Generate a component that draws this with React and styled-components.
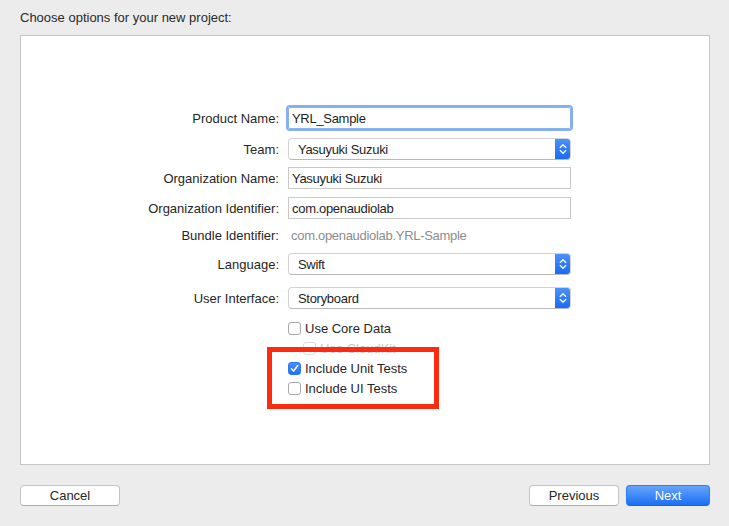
import React from 'react';
import styled, { createGlobalStyle } from 'styled-components';

const GlobalStyle = createGlobalStyle`
    body {
        margin: 0;
        background: #ececec;
        font-family: "Liberation Sans", Arial, sans-serif;
        font-size: 13px;
        color: #262626;
    }
`;

const Page = styled.div`
    width: 729px;
    height: 526px;
    box-sizing: border-box;
    padding: 0 19px 0 20px;
    display: flex;
    flex-direction: column;
`;

const Header = styled.div`
    height: 35px;
    display: flex;
    align-items: center;
    padding-bottom: 1px;
    box-sizing: border-box;
    font-size: 13px;
    color: #2a2a2a;
`;

const Panel = styled.div`
    position: relative;
    height: 430px;
    box-sizing: border-box;
    background: #fff;
    border: 1px solid #c6c6c6;
    padding-top: 71px;
`;

const Row = styled.div`
    display: flex;
    align-items: center;
    height: ${p => p.h || 22}px;
    margin-top: ${p => p.mt || 0}px;
`;

const Label = styled.div`
    width: 258px;
    margin-right: 9px;
    text-align: right;
    color: #262626;
    white-space: nowrap;
`;

const TextInput = styled.div`
    width: 283px;
    height: 22px;
    box-sizing: border-box;
    border: 1px solid #c9c9c9;
    padding-left: 3px;
    display: flex;
    align-items: center;
    color: #1e1e1e;
    letter-spacing: -0.3px;
    ${p => p.focused && `
        border-color: #8ab2f2;
        box-shadow: 0 0 0 2px #84aff4;
        border-radius: 2px;
    `}
`;

const Popup = styled.div`
    width: 283px;
    height: 22px;
    box-sizing: border-box;
    border: 1px solid #d2d2d2;
    border-bottom-color: #b8b8b8;
    border-radius: 4px;
    display: flex;
    align-items: center;
    justify-content: space-between;
    padding-left: 9px;
    overflow: hidden;
    color: #1e1e1e;
    letter-spacing: -0.3px;
`;

const Stepper = styled.div`
    width: 16px;
    height: 22px;
    margin-right: -1px;
    background: linear-gradient(#4f93f8, #1769f4);
    display: flex;
    align-items: center;
    justify-content: center;
`;

const Plain = styled.div`
    padding-left: 3px;
    color: #8c8c8c;
    letter-spacing: -0.3px;
`;

const CheckRow = styled.div`
    display: flex;
    align-items: center;
    height: 20px;
    margin-top: ${p => p.mt || 0}px;
    padding-left: ${p => 267 + (p.indent || 0)}px;
    color: ${p => (p.disabled ? '#c8c8c8' : '#262626')};
`;

const Box = styled.span`
    width: 13px;
    height: 13px;
    box-sizing: border-box;
    border-radius: 3px;
    margin-right: 4px;
    display: flex;
    align-items: center;
    justify-content: center;
    border: 1px solid ${p => (p.disabled ? '#dcdcdc' : '#a9a9a9')};
    background: ${p => (p.checked ? 'linear-gradient(#4b91f8, #1f6ff5)' : '#fff')};
    ${p => p.checked && 'border-color: #2f78f2;'}
`;

const Highlight = styled.div`
    position: absolute;
    left: 246px;
    top: 311px;
    width: 172px;
    height: 62px;
    box-sizing: border-box;
    border: 5px solid #fb2b10;
`;

const Footer = styled.div`
    flex: 1;
    display: flex;
    align-items: flex-start;
    padding-top: 20px;
    gap: 7px;
`;

const Spacer = styled.div`
    flex: 1;
`;

const Button = styled.button`
    height: 21px;
    width: ${p => p.w}px;
    box-sizing: border-box;
    border-radius: 4px;
    font-family: "Liberation Sans", Arial, sans-serif;
    font-size: 13px;
    padding: 0;
    border: 1px solid ${p => (p.primary ? '#2f7cf5' : '#c4c4c4')};
    border-bottom-color: ${p => (p.primary ? '#1563ea' : '#acacac')};
    background: ${p => (p.primary ? 'linear-gradient(#66a4f9, #1b6ff6)' : '#fff')};
    color: ${p => (p.primary ? '#fff' : '#262626')};
`;

const Arrows = () => (
    <svg width="8" height="12" viewBox="0 0 8 12">
        <path d="M1.2 4.4 L4 1.8 L6.8 4.4 M1.2 7.6 L4 10.2 L6.8 7.6" fill="none" stroke="#fff" strokeWidth="1.3" strokeLinecap="round" strokeLinejoin="round" />
    </svg>
);

const Check = () => (
    <svg width="9" height="9" viewBox="0 0 9 9">
        <path d="M1.5 4.8 L3.6 7 L7.6 1.8" fill="none" stroke="#fff" strokeWidth="1.5" strokeLinecap="round" strokeLinejoin="round" />
    </svg>
);

const Select = ({ value }) => (
    <Popup>
        <span>{value}</span>
        <Stepper><Arrows /></Stepper>
    </Popup>
);

const Checkbox = ({ label, checked, disabled, indent, mt }) => (
    <CheckRow indent={indent} disabled={disabled} mt={mt}>
        <Box checked={checked} disabled={disabled}>{checked && <Check />}</Box>
        {label}
    </CheckRow>
);

export default function App() {
    return (
        <Page>
            <GlobalStyle />
            <Header>Choose options for your new project:</Header>
            <Panel>
                <Row>
                    <Label>Product Name:</Label>
                    <TextInput focused>YRL_Sample</TextInput>
                </Row>
                <Row mt={9}>
                    <Label>Team:</Label>
                    <Select value="Yasuyuki Suzuki" />
                </Row>
                <Row mt={7}>
                    <Label>Organization Name:</Label>
                    <TextInput>Yasuyuki Suzuki</TextInput>
                </Row>
                <Row mt={8}>
                    <Label>Organization Identifier:</Label>
                    <TextInput>com.openaudiolab</TextInput>
                </Row>
                <Row mt={5}>
                    <Label>Bundle Identifier:</Label>
                    <Plain>com.openaudiolab.YRL-Sample</Plain>
                </Row>
                <Row mt={7}>
                    <Label>Language:</Label>
                    <Select value="Swift" />
                </Row>
                <Row mt={12}>
                    <Label>User Interface:</Label>
                    <Select value="Storyboard" />
                </Row>
                <Checkbox mt={9} label="Use Core Data" />
                <Checkbox indent={15} disabled label="Use CloudKit" />
                <Checkbox checked label="Include Unit Tests" />
                <Checkbox label="Include UI Tests" />
                <Highlight />
            </Panel>
            <Footer>
                <Button w={100}>Cancel</Button>
                <Spacer />
                <Button w={90}>Previous</Button>
                <Button w={84} primary>Next</Button>
            </Footer>
        </Page>
    );
}
